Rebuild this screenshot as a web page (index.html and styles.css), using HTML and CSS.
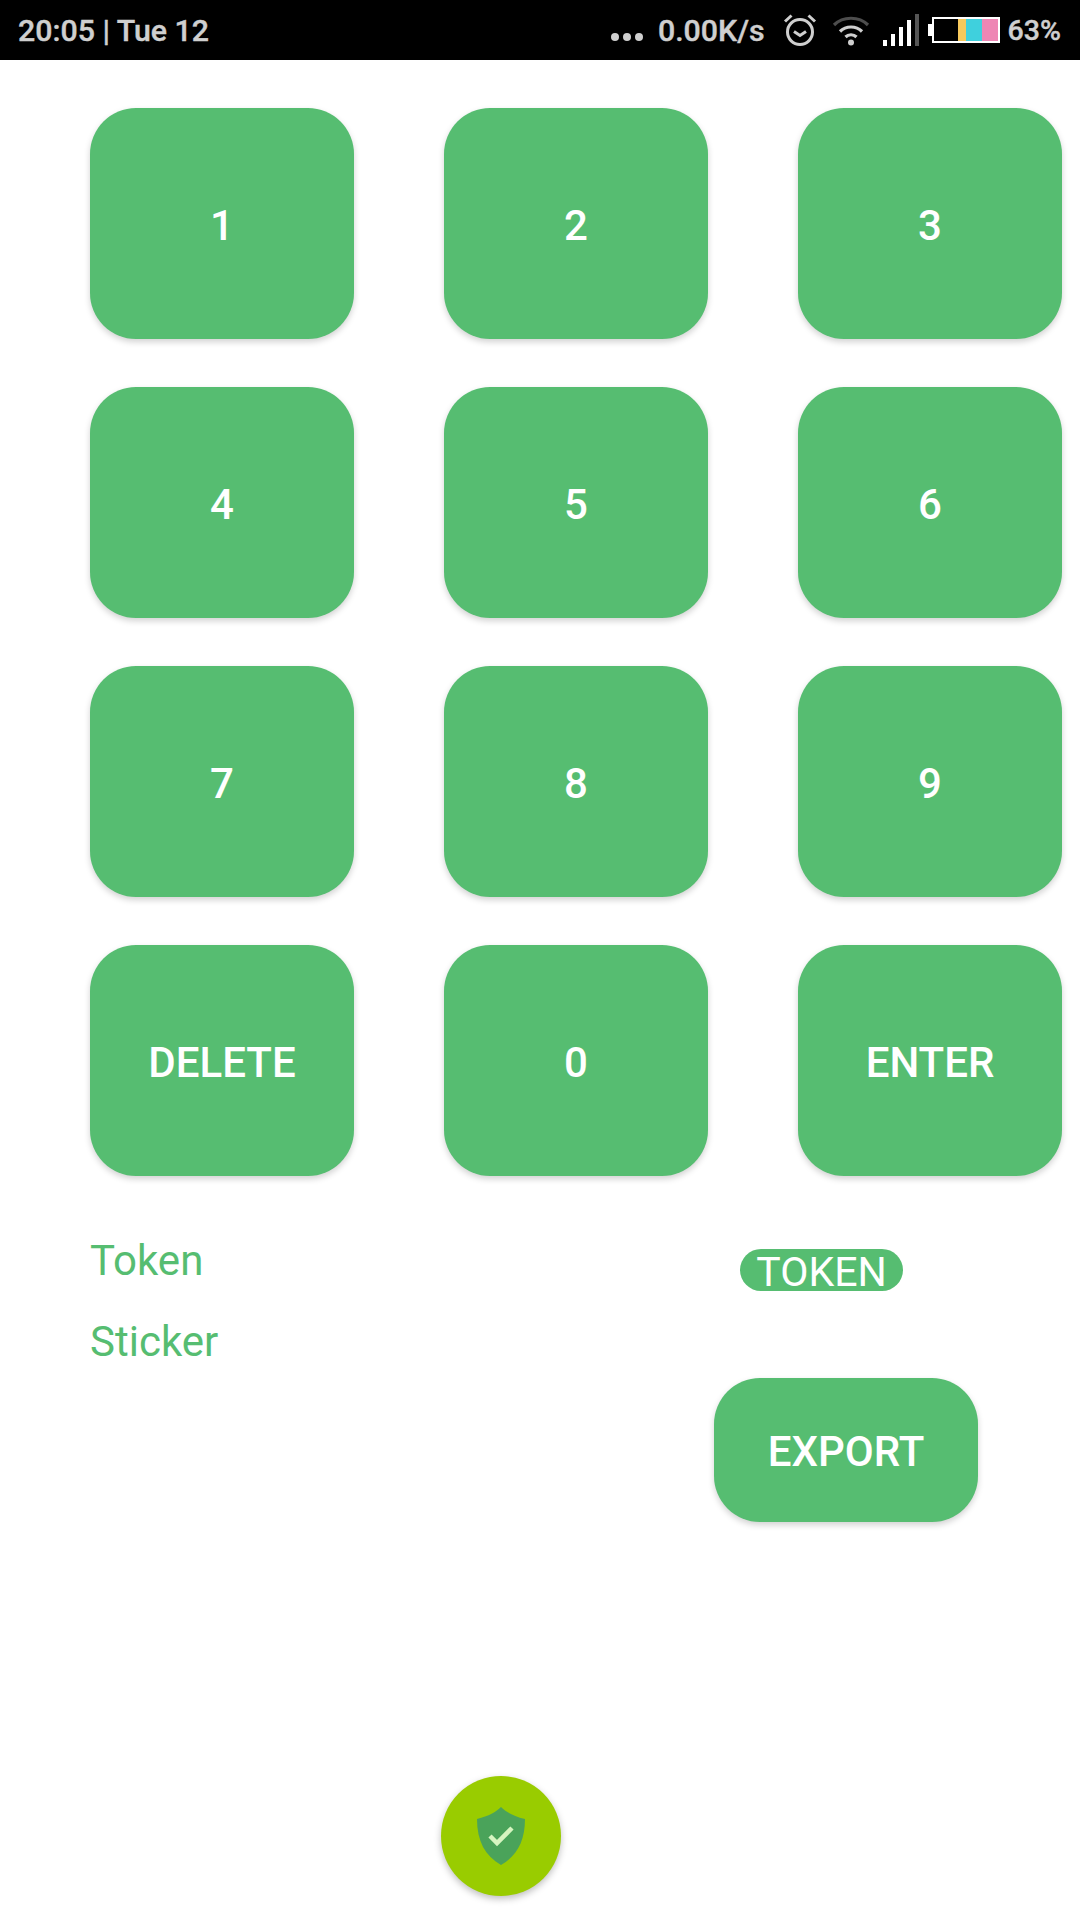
FILE: index.html
```html
<!DOCTYPE html>
<html>
<head>
<meta name="viewport" content="width=device-width, initial-scale=1.0">
<title>Keypad</title>
<link rel="stylesheet" href="styles.css">
</head>
<body>

  <!-- Status bar -->
  <div class="statusbar">
    <span class="clock">20:05 | Tue 12</span>
    <div class="status-right">
      <svg class="ic-dots" width="32" height="10" viewBox="0 0 32 10"><circle cx="4" cy="5" r="4"/><circle cx="16" cy="5" r="4"/><circle cx="28" cy="5" r="4"/></svg>
      <span class="speed">0.00K/s</span>
      <svg class="ic-alarm" width="34" height="34" viewBox="0 0 34 34">
        <circle cx="17" cy="19" r="12.5"/>
        <path d="M11 18.5l6 4 6-4"/>
        <path d="M2 8.5 8.5 2.5M32 8.5 25.5 2.5"/>
      </svg>
      <svg class="ic-wifi" width="38" height="32" viewBox="0 0 38 32">
        <path class="wifi-off" d="M2 11C11 2 27 2 36 11"/>
        <path d="M8 17.5C14 11.5 24 11.5 30 17.5"/>
        <path d="M13.5 23C16.5 20 21.5 20 24.5 23"/>
        <circle class="wifi-dot" cx="19" cy="28.5" r="3"/>
      </svg>
      <svg class="ic-signal" width="36" height="32" viewBox="0 0 36 32">
        <rect x="0" y="26" width="4" height="6"/>
        <rect x="8" y="20" width="4" height="12"/>
        <rect x="16" y="13" width="4" height="19"/>
        <rect x="24" y="6" width="4" height="26"/>
        <rect class="signal-off" x="32" y="0" width="4" height="32"/>
      </svg>
      <div class="battery">
        <span class="battery-tip"></span>
        <div class="battery-body">
          <span class="cell cell-empty"></span>
          <span class="cell cell-yellow"></span>
          <span class="cell cell-cyan"></span>
          <span class="cell cell-pink"></span>
        </div>
      </div>
      <span class="percent">63%</span>
    </div>
  </div>

  <!-- Number pad -->
  <div class="keypad">
    <button class="key">1</button>
    <button class="key">2</button>
    <button class="key">3</button>
    <button class="key">4</button>
    <button class="key">5</button>
    <button class="key">6</button>
    <button class="key">7</button>
    <button class="key">8</button>
    <button class="key">9</button>
    <button class="key">DELETE</button>
    <button class="key">0</button>
    <button class="key">ENTER</button>
  </div>

  <div class="lower">
    <div class="labels">
      <div class="label">Token</div>
      <div class="label">Sticker</div>
    </div>
    <div class="actions">
      <span class="pill">TOKEN</span>
      <button class="key export">EXPORT</button>
    </div>
  </div>

  <!-- Floating shield button -->
  <div class="fab">
    <svg width="48" height="58" viewBox="0 0 48 58">
      <path class="shield" d="M24 0C29 5 36 9 48 12C48 34 40 49 24 58C8 49 0 34 0 12C12 9 19 5 24 0Z"/>
      <path class="tick" d="M13 29l7 7 15-15"/>
    </svg>
  </div>

</body>
</html>
```

FILE: styles.css
```css
* {
  box-sizing: border-box;
}

body {
  margin: 0;
  height: 1920px;
  overflow: hidden;
  background-color: #ffffff;
  font-family: Roboto, sans-serif;
}

/* status bar */
.statusbar {
  height: 60px;
  background-color: #000000;
  color: #cfcfcf;
  font-size: 30.3px;
  font-weight: 500;
  -webkit-text-stroke: 0.4px #cfcfcf;
  display: flex;
  align-items: center;
  justify-content: space-between;
  padding: 0 19px 0 18px;
}

.status-right {
  display: flex;
  align-items: center;
}

.percent {
  font-size: 28.5px;
}

.ic-dots {
  fill: #cfcfcf;
  margin: 13px 15px 0 0;
}

.ic-alarm {
  fill: none;
  stroke: #cfcfcf;
  stroke-width: 3;
  margin: 0 15px 0 18px;
}

.ic-wifi {
  fill: none;
  stroke: #cfcfcf;
  stroke-width: 3.2;
  margin-right: 13px;
}

.ic-wifi .wifi-off {
  stroke: #4d4d4d;
}

.ic-wifi .wifi-dot {
  fill: #cfcfcf;
  stroke: none;
}

.ic-signal {
  fill: #ffffff;
  margin-right: 9px;
}

.ic-signal .signal-off {
  fill: #555555;
}

.battery {
  display: flex;
  align-items: center;
  margin-right: 8px;
}

.battery-tip {
  width: 4px;
  height: 12px;
  background-color: #ffffff;
}

.battery-body {
  width: 68px;
  height: 26px;
  border: 2px solid #ffffff;
  display: flex;
}

.cell-empty {
  width: 24px;
  background-color: #000000;
}

.cell-yellow {
  width: 8px;
  background-color: #f7c95c;
}

.cell-cyan {
  width: 16px;
  background-color: #3fd0dd;
}

.cell-pink {
  flex: 1;
  background-color: #ee86b4;
}

/* keypad */
.keypad {
  display: grid;
  grid-template-columns: repeat(3, 264px);
  grid-auto-rows: 231px;
  column-gap: 90px;
  row-gap: 48px;
  padding: 48px 0 0 90px;
}

.key {
  border: none;
  border-radius: 46px;
  background-color: #56bd71;
  color: #ffffff;
  font-family: Roboto, sans-serif;
  font-size: 42px;
  font-weight: 500;
  padding: 3px 0 0;
  box-shadow: 0 3px 6px rgba(0, 0, 0, 0.18);
}

/* lower part */
.lower {
  display: flex;
  justify-content: space-between;
  padding: 0 102px 0 90px;
}

.labels {
  padding-top: 61px;
}

.label {
  color: #56bd71;
  font-size: 42px;
  line-height: 47px;
  margin-bottom: 34px;
}

.actions {
  width: 264px;
  display: flex;
  flex-direction: column;
  align-items: flex-start;
  padding-top: 73px;
}

.pill {
  margin-left: 26px;
  width: 163px;
  height: 42px;
  border-radius: 21px;
  background-color: #56bd71;
  color: #ffffff;
  font-size: 41px;
  line-height: 47px;
  text-align: center;
}

.export {
  margin-top: 87px;
  width: 264px;
  height: 144px;
}

/* floating button */
.fab {
  width: 120px;
  height: 120px;
  margin: 254px 0 0 441px;
  border-radius: 50%;
  background-color: #99cc00;
  box-shadow: 0 3px 7px rgba(0, 0, 0, 0.25);
  display: flex;
  align-items: center;
  justify-content: center;
}

.shield {
  fill: #4aa35a;
}

.tick {
  fill: none;
  stroke: #d6f5c0;
  stroke-width: 4.5;
}
```
